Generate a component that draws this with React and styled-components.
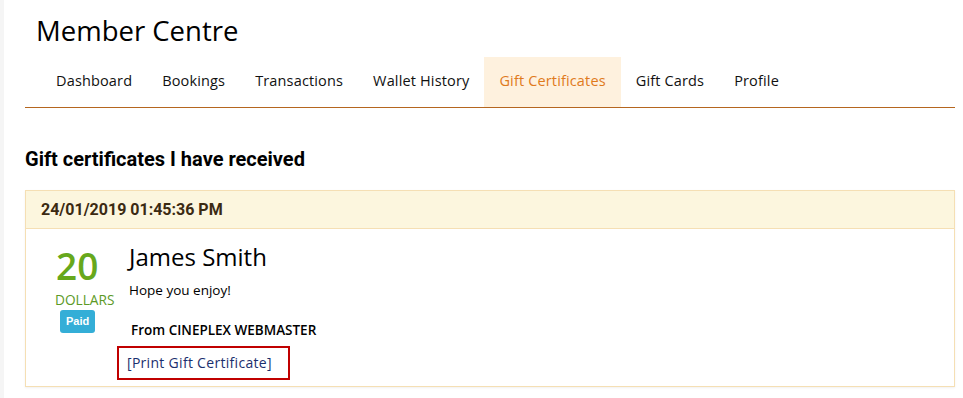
import styled, { createGlobalStyle } from 'styled-components';

const GlobalStyle = createGlobalStyle`
  body {
    margin: 0;
    background: #fff;
    font-family: "Open Sans", "Liberation Sans", sans-serif;
  }
`;

const tabs = ['Dashboard', 'Bookings', 'Transactions', 'Wallet History', 'Gift Certificates', 'Gift Cards', 'Profile'];

function App() {
  return (
    <>
      <GlobalStyle />
      <Page>
        <Title>Member Centre</Title>
        <TabBar>
          {tabs.map((t) => (
            <Tab key={t} active={t === 'Gift Certificates'}>{t}</Tab>
          ))}
        </TabBar>

        <SectionTitle>Gift certificates I have received</SectionTitle>

        <Card>
          <CardHeader>24/01/2019 01:45:36 PM</CardHeader>
          <CardBody>
            <Amount>
              <Value>20</Value>
              <Unit>DOLLARS</Unit>
              <Badge>Paid</Badge>
            </Amount>
            <Details>
              <Name>James Smith</Name>
              <Message>Hope you enjoy!</Message>
              <From>From CINEPLEX WEBMASTER</From>
              <PrintBox>
                <PrintLink href="#">[Print Gift Certificate]</PrintLink>
              </PrintBox>
            </Details>
          </CardBody>
        </Card>
      </Page>
    </>
  );
}

export default App;

const Page = styled.div`
  border-left: 4px solid #f5f5f5;
  padding: 0 8px 0 21px;
  min-height: 398px;
  box-sizing: border-box;
`;

const Title = styled.h1`
  margin: 0;
  padding: 12px 0 0 11px;
  font-family: "Open Sans", sans-serif;
  font-weight: 400;
  font-size: 27.5px;
  line-height: 38px;
  color: #000;
`;

const TabBar = styled.nav`
  display: flex;
  margin-top: 7px;
  padding-left: 16px;
  border-bottom: 1px solid #b5661f;
`;

const Tab = styled.a`
  display: block;
  padding: 0 15px;
  height: 50px;
  line-height: 48px;
  font-size: 14.5px;
  letter-spacing: 0.15px;
  color: ${(p) => (p.active ? '#e07a1c' : '#111')};
  background: ${(p) => (p.active ? '#fef1de' : 'transparent')};
  cursor: pointer;
`;

const SectionTitle = styled.h2`
  margin: 39px 0 0;
  font-family: Roboto, "Liberation Sans", sans-serif;
  font-weight: 700;
  font-size: 20px;
  line-height: 25px;
  color: #000;
`;

const Card = styled.div`
  margin-top: 18px;
  border: 1px solid #f5dfb4;
  box-shadow: 0 1px 2px rgba(0, 0, 0, 0.06);
`;

const CardHeader = styled.div`
  background: #fcf6de;
  border-bottom: 1px solid #f5dfb4;
  padding: 0 15px;
  height: 37px;
  line-height: 38px;
  font-family: Roboto, "Liberation Sans", sans-serif;
  font-weight: 700;
  font-size: 16px;
  color: #3b2a12;
`;

const CardBody = styled.div`
  display: flex;
  padding: 14px 15px 6px 30px;
`;

const Amount = styled.div`
  display: flex;
  flex-direction: column;
  align-items: flex-start;
  width: 73px;
  margin-top: 3px;
`;

const Value = styled.div`
  font-size: 37px;
  font-weight: 600;
  line-height: 40px;
  color: #67a81c;
`;

const Unit = styled.div`
  font-size: 13.7px;
  line-height: 16px;
  margin: 6px 0 0 -1px;
  color: #5c9a26;
`;

const Badge = styled.span`
  margin: 2px 0 0 4px;
  padding: 0 6px;
  height: 23px;
  line-height: 23px;
  border-radius: 3px;
  background: #34aed7;
  color: #fff;
  font-family: "Liberation Sans", Arial, sans-serif;
  font-weight: 700;
  font-size: 11px;
`;

const Details = styled.div`
  display: flex;
  flex-direction: column;
  align-items: flex-start;
`;

const Name = styled.div`
  font-size: 24px;
  line-height: 28px;
  color: #000;
`;

const Message = styled.div`
  margin-top: 10px;
  font-size: 13.5px;
  line-height: 18px;
  color: #000;
`;

const From = styled.div`
  margin: 22px 0 0 2px;
  font-size: 13.5px;
  font-weight: 600;
  line-height: 18px;
  color: #000;
`;

const PrintBox = styled.div`
  margin: 7px 0 0 -12px;
  border: 2px solid #c00000;
  padding: 3px 16px 5px 8px;
`;

const PrintLink = styled.a`
  font-size: 14px;
  line-height: 20px;
  color: #1b2f6e;
  text-decoration: none;
  letter-spacing: 0.3px;
`;
